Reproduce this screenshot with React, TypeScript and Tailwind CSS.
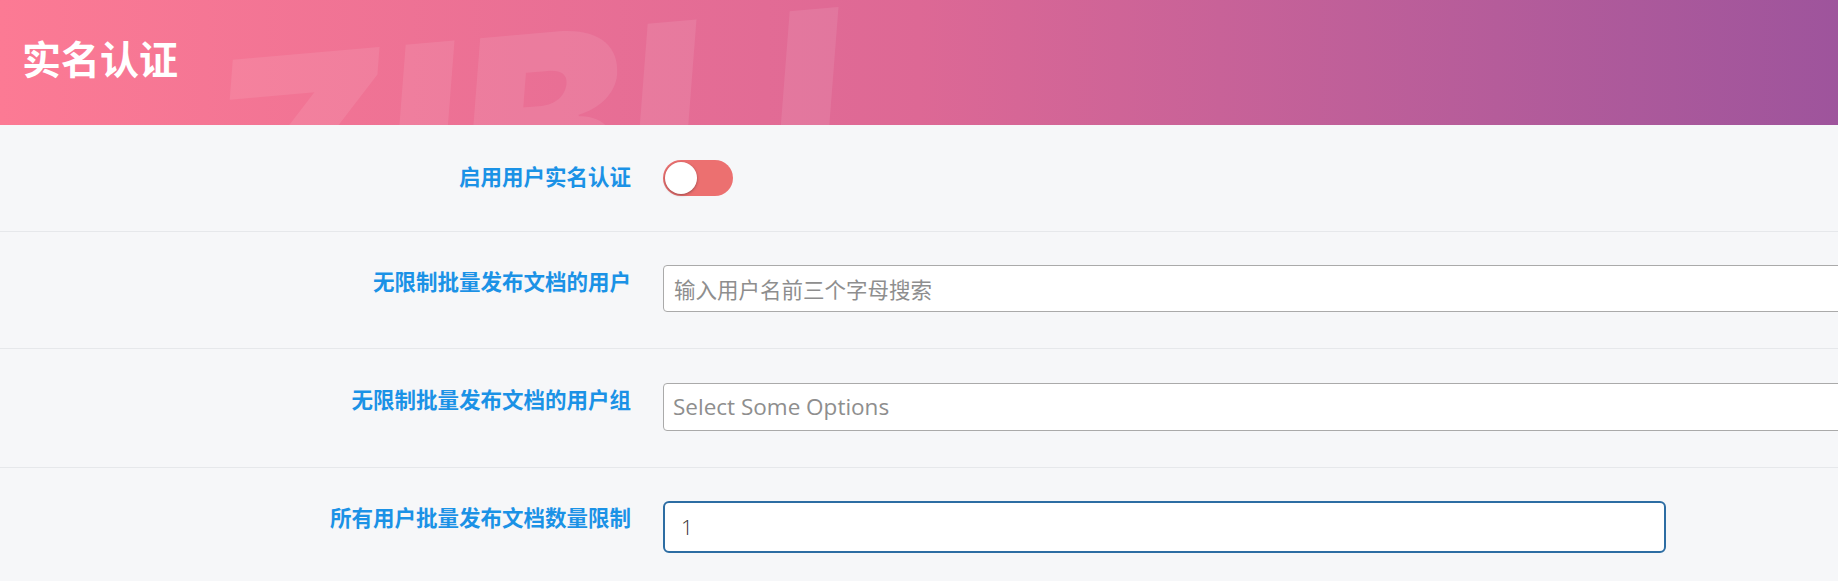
import { useState } from 'react';

const cjk = "font-['Noto_Sans_CJK_SC','Noto_Sans',sans-serif]";

function Toggle({ on, onChange }: { on: boolean; onChange: (v: boolean) => void }) {
  return (
    <button
      type="button"
      onClick={() => onChange(!on)}
      className={`relative block h-[36px] w-[70px] rounded-full ${on ? 'bg-[#4caf50]' : 'bg-[#ec7070]'}`}
    >
      <span
        className={`absolute top-[2px] h-[32px] w-[32px] rounded-full bg-white shadow-[0_1px_3px_rgba(0,0,0,0.35)] ${on ? 'left-[36px]' : 'left-[2px]'}`}
      />
    </button>
  );
}

function Row({ label, children, pad, last }: { label: string; children: React.ReactNode; pad: string; last?: boolean }) {
  return (
    <div className={`flex items-start gap-[32px] ${pad} ${last ? '' : 'border-b border-[#e6e8eb]'}`}>
      <div className={`w-[631px] shrink-0 text-right text-[21.5px] font-bold leading-[32px] text-[#1b92e6] ${cjk}`}>
        {label}
      </div>
      <div className="flex shrink-0">{children}</div>
    </div>
  );
}

export default function App() {
  const [enabled, setEnabled] = useState(false);
  const [limit, setLimit] = useState('1');

  return (
    <div className="h-[581px] w-full overflow-hidden bg-[#f6f7f9]">
      {/* Banner */}
      <div className="relative h-[125px] overflow-hidden bg-linear-to-r from-[#fc7a94] via-[#dd6895] to-[#9e549c]">
        <div className="pointer-events-none absolute left-[208px] top-[-2px] -rotate-[5deg] select-none whitespace-nowrap font-['Inter','Liberation_Sans',sans-serif] text-[248px] font-black italic leading-none tracking-[0.01em] text-white/[0.09]">
          ZIBLL
        </div>
        <h1 className={`relative pl-[22px] pt-[34px] text-[39px] font-bold leading-[46px] text-white ${cjk}`}>实名认证</h1>
      </div>

      {/* Options */}
      <Row label="启用用户实名认证" pad="py-[35px]">
        <Toggle on={enabled} onChange={setEnabled} />
      </Row>

      <Row label="无限制批量发布文档的用户" pad="pt-[33px] pb-[36px]">
        <input
          type="text"
          placeholder="输入用户名前三个字母搜索"
          className={`block h-[47px] w-[1400px] rounded-[4px] border border-[#aaaaaa] bg-white px-[10px] text-[21.5px] text-[#333] placeholder:text-[#8e8e8e] focus:outline-none ${cjk}`}
        />
      </Row>

      <Row label="无限制批量发布文档的用户组" pad="pt-[34px] pb-[36px]">
        <div className="flex h-[48px] w-[1400px] items-center rounded-[4px] border border-[#aaaaaa] bg-white px-[9px] font-['Open_Sans','Liberation_Sans',sans-serif] text-[22.5px] text-[#8e8e8e]">
          Select Some Options
        </div>
      </Row>

      <Row label="所有用户批量发布文档数量限制" pad="pt-[33px] pb-[30px]" last>
        <input
          type="text"
          autoFocus
          value={limit}
          onChange={(e) => setLimit(e.target.value)}
          className="block h-[52px] w-[1003px] rounded-[6px] border-2 border-[#2d6da3] bg-white px-[16px] font-['Open_Sans','Liberation_Sans',sans-serif] text-[21px] font-light text-[#333] caret-[#222] focus:outline-none"
        />
      </Row>
    </div>
  );
}
